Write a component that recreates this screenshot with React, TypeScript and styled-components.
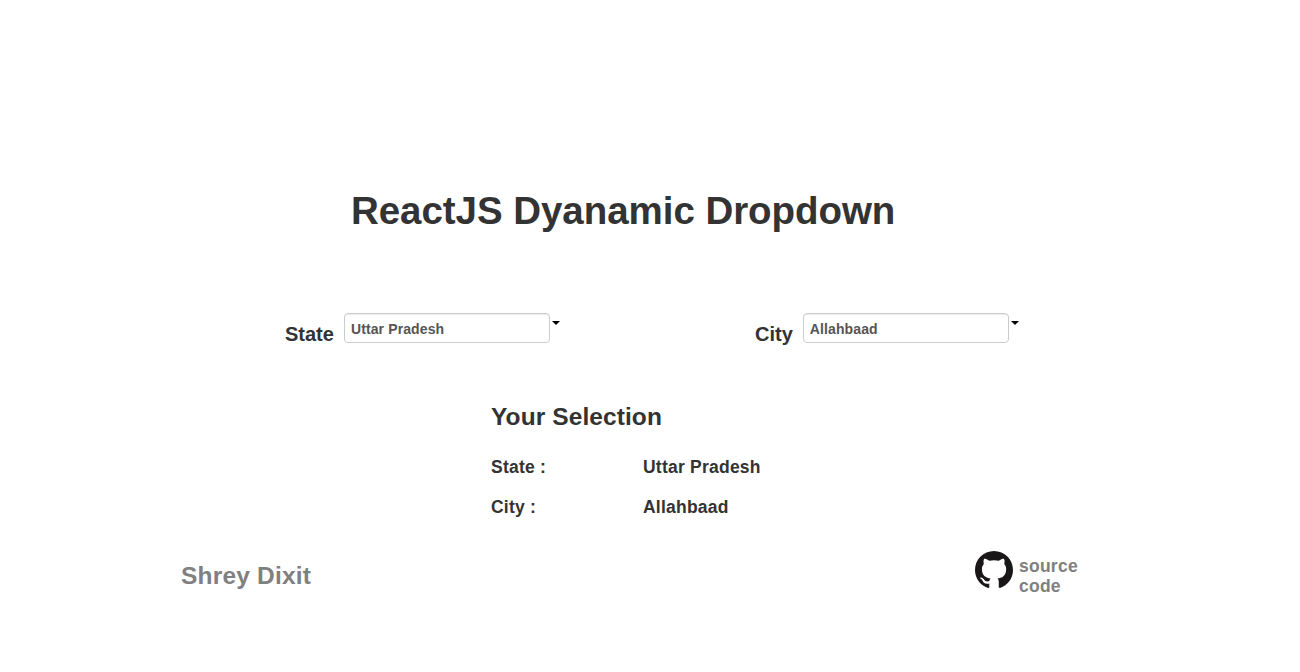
import React from 'react';
import styled, { createGlobalStyle } from 'styled-components';

const GlobalStyle = createGlobalStyle`
  body {
    margin: 0;
    background: #fff;
    color: #333;
    font-family: "Liberation Sans", Helvetica, Arial, sans-serif;
  }
  h1, h2, h3, h4 { margin: 0; font-weight: bold; }
`;

const Page = styled.main`
  width: 940px;
  height: 672px;
  margin: 0 auto;
  padding: 191px 0 0 1px;
  box-sizing: border-box;
`;

const Title = styled.h1`
  padding-left: 170px;
  font-size: 38.5px;
  letter-spacing: -0.05px;
  line-height: 40px;
  white-space: nowrap;
`;

const Pickers = styled.div`
  display: flex;
  margin-top: 82px;
  padding-left: 104px;
`;

const Picker = styled.div<{ $width: number }>`
  display: flex;
  width: ${(p) => p.$width}px;
  height: 30px;
`;

const PickerLabel = styled.label`
  padding-top: 10px;
  margin-right: 10px;
  font-size: 20px;
  font-weight: bold;
  line-height: 22px;
`;

const Field = styled.input`
  box-sizing: border-box;
  width: 206px;
  height: 30px;
  padding: 5px 6px 3px;
  border: 1px solid #ccc;
  border-radius: 4px;
  background: #fff;
  box-shadow: inset 0 1px 1px rgba(0, 0, 0, 0.075);
  color: #555;
  font: bold 14px/20px "Liberation Sans", Arial, sans-serif;
  letter-spacing: 0.12px;
`;

const Caret = styled.span`
  width: 0;
  height: 0;
  margin: 8px 0 0 2px;
  border-top: 4px solid #000;
  border-right: 4px solid transparent;
  border-left: 4px solid transparent;
`;

const Selection = styled.section`
  margin-top: 54px;
  padding-left: 310px;
`;

const SelectionTitle = styled.h3`
  margin-bottom: 20px;
  font-size: 24.5px;
  letter-spacing: 0.09px;
  line-height: 40px;
`;

const SelectionRow = styled.div`
  display: grid;
  grid-template-columns: 152px auto;
  height: 20px;
  margin-bottom: 20px;
  font-size: 17.5px;
  font-weight: bold;
  letter-spacing: 0.23px;
  line-height: 20px;
`;

const Footer = styled.footer`
  display: flex;
  justify-content: space-between;
  margin-top: 34px;
  color: #808080;
`;

const Author = styled.h3`
  padding-top: 5px;
  font-size: 24.5px;
  letter-spacing: 0.2px;
  line-height: 40px;
`;

const Source = styled.a`
  display: flex;
  width: 145px;
  gap: 6px;
  color: #808080;
  font-size: 17.5px;
  font-weight: bold;
  letter-spacing: 0.25px;
  line-height: 20px;
  text-decoration: none;
`;

const SourceText = styled.span`
  width: 65px;
  padding-top: 5px;
`;

const GithubMark = () => (
  <svg width="38" height="38" viewBox="0 0 16 16" fill="#191717" aria-hidden="true">
    <path d="M8 0C3.58 0 0 3.58 0 8c0 3.54 2.29 6.53 5.47 7.59.4.07.55-.17.55-.38 0-.19-.01-.82-.01-1.49-2.01.37-2.53-.49-2.69-.94-.09-.23-.48-.94-.82-1.13-.28-.15-.68-.52-.01-.53.63-.01 1.08.58 1.23.82.72 1.21 1.87.87 2.33.66.07-.52.28-.87.51-1.07-1.78-.2-3.64-.89-3.64-3.95 0-.87.31-1.59.82-2.15-.08-.2-.36-1.02.08-2.12 0 0 .67-.21 2.2.82.64-.18 1.32-.27 2-.27s1.36.09 2 .27c1.53-1.04 2.2-.82 2.2-.82.44 1.1.16 1.92.08 2.12.51.56.82 1.27.82 2.15 0 3.07-1.87 3.75-3.65 3.95.29.25.54.73.54 1.48 0 1.07-.01 1.93-.01 2.2 0 .21.15.46.55.38A8.01 8.01 0 0 0 16 8c0-4.42-3.58-8-8-8z" />
  </svg>
);

export default function App() {
  const [state, setState] = React.useState('Uttar Pradesh');
  const [city, setCity] = React.useState('Allahbaad');
  return (
    <>
      <GlobalStyle />
      <Page>
        <Title>ReactJS Dyanamic Dropdown</Title>
        <Pickers>
          <Picker $width={470}>
            <PickerLabel htmlFor="state">State</PickerLabel>
            <Field id="state" value={state} onChange={(e) => setState(e.target.value)} />
            <Caret />
          </Picker>
          <Picker $width={270}>
            <PickerLabel htmlFor="city">City</PickerLabel>
            <Field id="city" value={city} onChange={(e) => setCity(e.target.value)} />
            <Caret />
          </Picker>
        </Pickers>
        <Selection>
          <SelectionTitle>Your Selection</SelectionTitle>
          <SelectionRow><span>State :</span><span>{state}</span></SelectionRow>
          <SelectionRow><span>City :</span><span>{city}</span></SelectionRow>
        </Selection>
        <Footer>
          <Author>Shrey Dixit</Author>
          <Source>
            <GithubMark />
            <SourceText>source code</SourceText>
          </Source>
        </Footer>
      </Page>
    </>
  );
}
